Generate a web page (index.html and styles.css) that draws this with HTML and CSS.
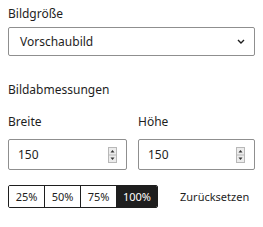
FILE: index.html
```html
<!DOCTYPE html>
<html lang="de">
<head>
    <meta charset="UTF-8">
    <meta name="viewport" content="width=device-width, initial-scale=1.0">
    <title>Bildgröße</title>
    <link rel="stylesheet" href="styles.css">
</head>
<body>
    <div class="panel">
        <div class="field">
            <label class="field-label">Bildgröße</label>
            <div class="select">
                <span>Vorschaubild</span>
                <svg class="chevron" width="8" height="5" viewBox="0 0 8 5">
                    <path d="M1 1l3 3 3-3" fill="none" stroke="#1e1e1e" stroke-width="1.4"/>
                </svg>
            </div>
        </div>

        <h3 class="section-title">Bildabmessungen</h3>

        <div class="dimensions">
            <div class="dim">
                <label class="field-label dim-label">Breite</label>
                <div class="number-box">
                    <span>150</span>
                    <svg class="spinner" width="9" height="16" viewBox="0 0 9 16">
                        <rect x="0.5" y="0.5" width="8" height="15" fill="#ececec" stroke="#b8b8b8"/>
                        <line x1="0.5" y1="8" x2="8.5" y2="8" stroke="#b8b8b8"/>
                        <path d="M2.5 5.5h4l-2-2.5z" fill="#333"/>
                        <path d="M2.5 10.5h4l-2 2.5z" fill="#333"/>
                    </svg>
                </div>
            </div>
            <div class="dim">
                <label class="field-label dim-label">Höhe</label>
                <div class="number-box">
                    <span>150</span>
                    <svg class="spinner" width="9" height="16" viewBox="0 0 9 16">
                        <rect x="0.5" y="0.5" width="8" height="15" fill="#ececec" stroke="#b8b8b8"/>
                        <line x1="0.5" y1="8" x2="8.5" y2="8" stroke="#b8b8b8"/>
                        <path d="M2.5 5.5h4l-2-2.5z" fill="#333"/>
                        <path d="M2.5 10.5h4l-2 2.5z" fill="#333"/>
                    </svg>
                </div>
            </div>
        </div>

        <div class="scale-row">
            <div class="scale-group">
                <button class="scale w25">25%</button>
                <button class="scale w50">50%</button>
                <button class="scale w75">75%</button>
                <button class="scale w100 active">100%</button>
            </div>
            <button class="reset">Zurücksetzen</button>
        </div>
    </div>
</body>
</html>
```

FILE: styles.css
```css
* {
    box-sizing: border-box;
    margin: 0;
    padding: 0;
}

body {
    font-family: 'Noto Sans', 'Open Sans', sans-serif;
    font-size: 12px;
    color: #1e1e1e;
    background: #fff;
}

.panel {
    padding: 6px 8px 8px;
    width: 263px;
}

.field-label {
    display: block;
    font-size: 12px;
    line-height: 16px;
    margin-bottom: 5px;
}

.dim-label {
    margin-bottom: 9px;
}

.select {
    height: 29px;
    border: 1px solid #8f8f8f;
    border-radius: 2px;
    display: flex;
    align-items: center;
    justify-content: space-between;
    padding: 0 8px 0 11px;
    font-size: 12px;
}

.chevron {
    margin-right: 1px;
}

.section-title {
    font-size: 12px;
    font-weight: normal;
    line-height: 16px;
    margin-top: 26px;
    margin-bottom: 16px;
}

.dimensions {
    display: grid;
    grid-template-columns: 119px 117px;
    gap: 11px;
}

.number-box {
    height: 31px;
    border: 1px solid #8f8f8f;
    border-radius: 2px;
    display: flex;
    align-items: center;
    justify-content: space-between;
    padding: 0 9px 0 9px;
}

.scale-row {
    display: flex;
    align-items: center;
    margin-top: 15px;
}

.scale-group {
    display: flex;
    border: 1px solid #1e1e1e;
    border-radius: 2px;
    overflow: hidden;
}

button {
    font-family: inherit;
    font-size: 11px;
    color: #1e1e1e;
    background: #fff;
    border: none;
    cursor: pointer;
}

.scale {
    height: 21px;
    border-left: 1px solid #1e1e1e;
    text-align: center;
}

.scale:first-child {
    border-left: none;
}

.w25 { width: 35px; }
.w50 { width: 36px; }
.w75 { width: 36px; }
.w100 { width: 41px; }

.scale.active {
    background: #1e1e1e;
    color: #fff;
}

.reset {
    margin-left: 22px;
}
```
